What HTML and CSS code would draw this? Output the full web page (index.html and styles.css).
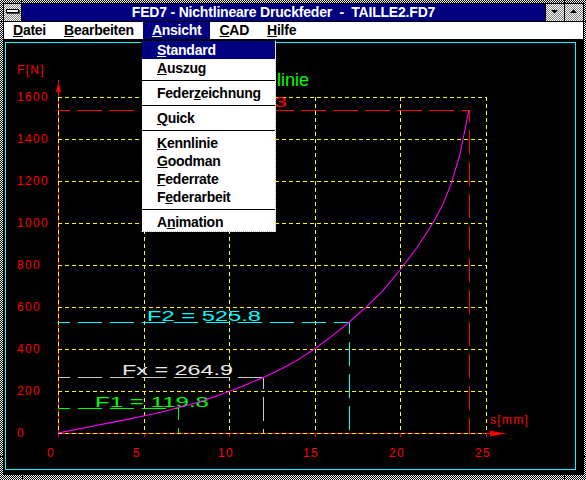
FILE: index.html
```html
<!DOCTYPE html>
<html lang="de">
<head>
<meta charset="utf-8">
<title>FED7 - Nichtlineare Druckfeder</title>
<link rel="stylesheet" href="styles.css">
</head>
<body>
<div class="window">
  <div class="frame">
    <div class="titlebar">
      <div class="sysbox"><span class="sysbar"></span></div>
      <div class="title">FED7 - Nichtlineare Druckfeder  -  TAILLE2.FD7</div>
      <div class="btn"><svg width="18" height="17" viewBox="0 0 18 17"><polygon points="5,6 12,6 8.5,9.5"/></svg></div>
      <div class="btn"><svg width="18" height="17" viewBox="0 0 18 17"><polygon points="5,9 12,9 8.5,5.5"/></svg></div>
    </div>
    <nav class="menubar">
      <span class="mi"><u>D</u>atei</span>
      <span class="mi"><u>B</u>earbeiten</span>
      <span class="mi active"><u>A</u>nsicht</span>
      <span class="mi"><u>C</u>AD</span>
      <span class="mi"><u>H</u>ilfe</span>
    </nav>
    <div class="client">
      <svg class="chart" width="579" height="434" viewBox="4 40 579 434">
        <rect class="frame-rect" x="5.5" y="42.5" width="570" height="427"/>

        <g class="axis-red">
          <line x1="58.5" y1="80" x2="58.5" y2="437"/>
          <line x1="58" y1="433.5" x2="505" y2="433.5"/>
          <line x1="144.5" y1="433" x2="144.5" y2="437"/>
          <line x1="229.5" y1="433" x2="229.5" y2="437"/>
          <line x1="315.5" y1="433" x2="315.5" y2="437"/>
          <line x1="400.5" y1="433" x2="400.5" y2="437"/>
          <line x1="486.5" y1="433" x2="486.5" y2="437"/>
        </g>
        <polygon class="arrow" points="58.5,82 61,92 56,92"/>
        <polygon class="arrow" points="490,430.5 505,433.5 490,436.5"/>

        <g class="grid">
          <line x1="58" y1="97.5" x2="486" y2="97.5"/>
          <line x1="58" y1="139.5" x2="486" y2="139.5"/>
          <line x1="58" y1="181.5" x2="486" y2="181.5"/>
          <line x1="58" y1="223.5" x2="486" y2="223.5"/>
          <line x1="58" y1="265.5" x2="486" y2="265.5"/>
          <line x1="58" y1="307.5" x2="486" y2="307.5"/>
          <line x1="58" y1="349.5" x2="486" y2="349.5"/>
          <line x1="58" y1="391.5" x2="486" y2="391.5"/>
          <line x1="58" y1="433.5" x2="486" y2="433.5"/>
          <line x1="58.5" y1="97" x2="58.5" y2="433"/>
          <line x1="144.5" y1="97" x2="144.5" y2="433"/>
          <line x1="229.5" y1="97" x2="229.5" y2="433"/>
          <line x1="315.5" y1="97" x2="315.5" y2="433"/>
          <line x1="400.5" y1="97" x2="400.5" y2="433"/>
          <line x1="486.5" y1="97" x2="486.5" y2="433"/>
        </g>

        <g class="lbl-axis">
          <text x="17" y="74" letter-spacing="1">F[N]</text>
          <text x="17" y="101">1600</text>
          <text x="17" y="143">1400</text>
          <text x="17" y="185">1200</text>
          <text x="17" y="227">1000</text>
          <text x="17" y="269">800</text>
          <text x="17" y="311">600</text>
          <text x="17" y="353">400</text>
          <text x="17" y="395">200</text>
          <text x="17" y="437">0</text>
          <text x="47" y="457">0</text>
          <text x="133" y="457">5</text>
          <text x="218" y="457">10</text>
          <text x="303" y="457">15</text>
          <text x="389" y="457">20</text>
          <text x="475" y="457">25</text>
          <text x="490" y="424" letter-spacing="2">s[mm]</text>
        </g>

        <text class="title-lbl" x="309" y="86" text-anchor="end">Kennlinie</text>

        <text class="flbl red" x="162" y="107" textLength="125" lengthAdjust="spacingAndGlyphs">Fn = 1538.3</text>
        <text class="flbl cyan" x="147" y="320.5" textLength="114" lengthAdjust="spacingAndGlyphs">F2 = 525.8</text>
        <text class="flbl grey" x="122" y="375" textLength="111" lengthAdjust="spacingAndGlyphs">Fx = 264.9</text>
        <text class="flbl green" x="95" y="406.5" textLength="114" lengthAdjust="spacingAndGlyphs">F1 = 119.8</text>

        <g class="dash red">
          <line x1="58" y1="110.5" x2="469" y2="110.5"/>
          <line x1="469.5" y1="110" x2="469.5" y2="433"/>
        </g>
        <g class="dash cyan">
          <line x1="58" y1="322.5" x2="349" y2="322.5"/>
          <line x1="349.5" y1="322" x2="349.5" y2="433"/>
        </g>
        <g class="dash grey">
          <line x1="58" y1="377.5" x2="263" y2="377.5"/>
          <line x1="263.5" y1="377" x2="263.5" y2="433"/>
        </g>
        <g class="dash green">
          <line x1="58" y1="408.5" x2="178" y2="408.5"/>
          <line x1="178.5" y1="408" x2="178.5" y2="433"/>
        </g>

        <polyline class="curve" points="58,433 75.1,429.6 92.2,426.3 109.3,422.9 126.4,419.6 143.5,416 160.6,412.2 177.7,407.8 194.8,403.2 211.9,397.7 229,391.6 246.1,384.7 263.2,377.4 280.3,369.4 297.4,360.1 314.5,349 331.6,336.4 348.7,322.5 365.8,307.4 382.9,290.6 400,270 417.1,247.5 434.2,221 442.8,204.5 451.3,183.4 459.9,154.5 464.5,132 468.9,110"/>
      </svg>
    </div>
    <div class="dropdown">
      <div class="dd sel"><u>S</u>tandard</div>
      <div class="dd"><u>A</u>uszug</div>
      <div class="sep"></div>
      <div class="dd">Feder<u>z</u>eichnung</div>
      <div class="sep"></div>
      <div class="dd"><u>Q</u>uick</div>
      <div class="sep"></div>
      <div class="dd"><u>K</u>ennlinie</div>
      <div class="dd"><u>G</u>oodman</div>
      <div class="dd"><u>F</u>ederrate</div>
      <div class="dd">F<u>e</u>derarbeit</div>
      <div class="sep"></div>
      <div class="dd">A<u>n</u>imation</div>
    </div>
  </div>
</div>
</body>
</html>
```

FILE: styles.css
```css
html, body {
  margin: 0;
  padding: 0;
  background: #000;
}

.window {
  position: relative;
  width: 586px;
  height: 480px;
  box-sizing: border-box;
  padding: 3px 2px 5px 3px;
  background: repeating-conic-gradient(#000 0% 25%, #fff 0% 50%) 0 0 / 2px 2px;
}

/* sizing-segment marks on the window frame */
.window::before {
  content: "";
  position: absolute;
  left: 21px;
  top: 0;
  width: 1px;
  height: 5px;
  background: #000;
  box-shadow: 543px 0 #000, 1px 475px #000, 543px 475px #000;
}

.window::after {
  content: "";
  position: absolute;
  left: 0;
  top: 21px;
  width: 3px;
  height: 1px;
  background: #000;
  box-shadow: 583px 0 #000, 0 435px #000, 583px 435px #000;
}

.frame {
  height: 100%;
  box-sizing: border-box;
  border: 1px solid #000;
  background: #000;
  display: flex;
  flex-direction: column;
  position: relative;
}

.titlebar {
  flex: none;
  height: 17px;
  display: flex;
  border-bottom: 1px solid #000;
}

.sysbox {
  width: 17px;
  border-right: 1px solid #000;
  background: repeating-conic-gradient(#808080 0% 25%, #fff 0% 50%) 0 0 / 2px 2px;
}

.sysbar {
  display: block;
  width: 11px;
  height: 2px;
  margin: 5px 0 0 2px;
  border: 1px solid #000;
  background: #fff;
  box-shadow: 1px 1px 0 #404040;
}

.title {
  flex: 1;
  background: #000080;
  color: #fff;
  font: bold 14px/17px "Liberation Sans", Arial, sans-serif;
  letter-spacing: -0.2px;
  text-align: center;
  white-space: pre;
}

.btn {
  width: 18px;
  border-left: 1px solid #000;
  background: repeating-conic-gradient(#808080 0% 25%, #fff 0% 50%) 0 0 / 2px 2px;
}

.btn svg {
  display: block;
  fill: #000;
}

.menubar {
  flex: none;
  height: 17px;
  display: flex;
  background: #fff;
  border-bottom: 1px solid #000;
  font: bold 14px/17px "Liberation Sans", Arial, sans-serif;
  letter-spacing: -0.25px;
  color: #000;
}

.mi {
  padding: 0 9px;
}

.mi.active {
  background: #000080;
  color: #fff;
}

u {
  text-decoration-thickness: 1px;
  text-underline-offset: 1px;
}

.client {
  flex: 1;
  position: relative;
}

.chart {
  display: block;
}

.chart text {
  font-family: "Liberation Sans", Arial, sans-serif;
}

.frame-rect {
  fill: none;
  stroke: #00ffff;
  stroke-width: 1;
  shape-rendering: crispEdges;
}

.axis-red line {
  stroke: #ff0000;
  stroke-width: 1;
  shape-rendering: crispEdges;
}

.arrow {
  fill: #ff0000;
}

.grid line {
  stroke: #ffff00;
  stroke-width: 1;
  stroke-dasharray: 4 3;
  shape-rendering: crispEdges;
}

.lbl-axis text {
  fill: #ff0000;
  font-size: 12px;
  letter-spacing: 1.3px;
}

.title-lbl {
  fill: #00ff00;
  font-size: 18px;
}

.flbl {
  font-size: 15px;
}

.flbl.red { fill: #ff0000; }
.flbl.cyan { fill: #00ffff; }
.flbl.grey { fill: #e8e8e8; }
.flbl.green { fill: #00ff00; }

.dash line {
  stroke-width: 1;
  stroke-dasharray: 24 8;
  stroke-dashoffset: 12;
  shape-rendering: crispEdges;
}

.dash.red line { stroke: #ff0000; }
.dash.cyan line { stroke: #00ffff; }
.dash.grey line { stroke: #c8c8c8; }
.dash.green line { stroke: #00ff00; }

.curve {
  fill: none;
  stroke: #ff00ff;
  stroke-width: 1.1;
  stroke-linejoin: round;
}

.dropdown {
  position: absolute;
  left: 137px;
  top: 36px;
  width: 133px;
  background: #fff;
  border-top: 1px solid #000;
  border-left: 1px solid #000;
  border-right: 1px dotted #c0c0c0;
  border-bottom: 1px dotted #c0c0c0;
  font: bold 14px/18px "Liberation Sans", Arial, sans-serif;
  letter-spacing: -0.25px;
  color: #000;
}

.dd {
  height: 18px;
  padding-left: 15px;
  white-space: nowrap;
}

.dd.sel {
  background: #000080;
  color: #fff;
}

.sep {
  margin: 3px 0;
  border-top: 1px solid #000;
}
```
